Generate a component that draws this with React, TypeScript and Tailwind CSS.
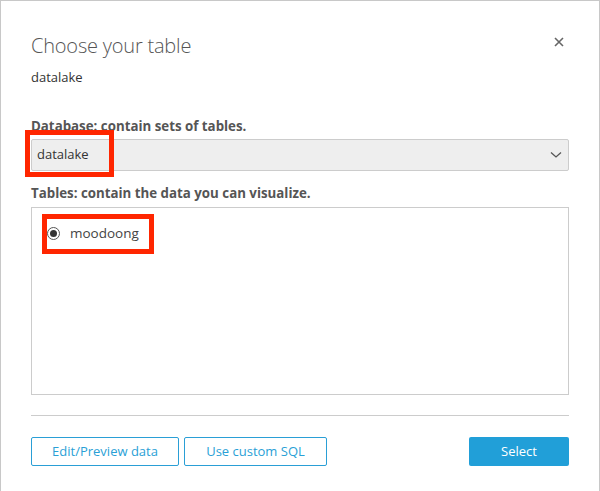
import React from 'react'

export default function App() {
  return (
    <div className="w-[600px] h-[491px] bg-white border-l border-t border-r border-[#c8c8c8] font-['Open_Sans',sans-serif] px-[30px] overflow-hidden">
      <div className="flex justify-between items-start pt-[31px]">
        <h1 className="text-[20px] font-light text-[#555] leading-[28px] tracking-[-0.2px]">Choose your table</h1>
        <button className="mt-[5px] mr-[5px] text-[#555]">
          <svg width="10" height="10" viewBox="0 0 10 10">
            <path d="M1 1L9 9M9 1L1 9" stroke="#666" strokeWidth="1.6" />
          </svg>
        </button>
      </div>
      <p className="mt-[8px] text-[13px] text-[#333] leading-[18px]">datalake</p>

      <p className="mt-[31px] text-[13.3px] font-bold text-[#555] leading-[18px]">Database: contain sets of tables.</p>
      <div className="relative mt-[4px]">
        <div className="h-[32px] bg-[#eeeeee] border border-[#cccccc] rounded-[2px] flex items-center justify-between pl-[5px] pr-[6px]">
          <span className="text-[13px] text-[#333]">datalake</span>
          <svg width="12" height="8" viewBox="0 0 12 8">
            <path d="M1 1.5L6 6L11 1.5" fill="none" stroke="#555" strokeWidth="1.3" />
          </svg>
        </div>
        <div className="absolute left-[-6px] top-[-9px] w-[89px] h-[47px] border-[5px] border-[#ff2600]" />
      </div>

      <p className="mt-[13px] text-[13.3px] font-bold text-[#555] leading-[18px]">Tables: contain the data you can visualize.</p>
      <div className="relative mt-[5px] h-[188px] border border-[#cccccc]">
        <div className="flex items-center gap-[10px] pl-[15px] pt-[16px]">
          <span className="w-[13px] h-[13px] rounded-full border border-[#555] flex items-center justify-center">
            <span className="w-[7px] h-[7px] rounded-full bg-[#333]" />
          </span>
          <span className="text-[13.5px] text-[#444] leading-[18px]">moodoong</span>
        </div>
        <div className="absolute left-[10px] top-[6px] w-[112px] h-[40px] border-[5px] border-[#ff2600]" />
      </div>

      <div className="mt-[20px] border-t border-[#cccccc]" />

      <div className="mt-[21px] flex items-center">
        <button className="w-[148px] h-[29px] border border-[#2a9fd6] rounded-[2px] text-[13px] text-[#2a9fd6]">Edit/Preview data</button>
        <button className="ml-[5px] w-[143px] h-[29px] border border-[#2a9fd6] rounded-[2px] text-[13px] text-[#2a9fd6]">Use custom SQL</button>
        <button className="ml-auto w-[100px] h-[29px] bg-[#219fd8] rounded-[2px] text-[13px] text-white">Select</button>
      </div>
    </div>
  )
}
